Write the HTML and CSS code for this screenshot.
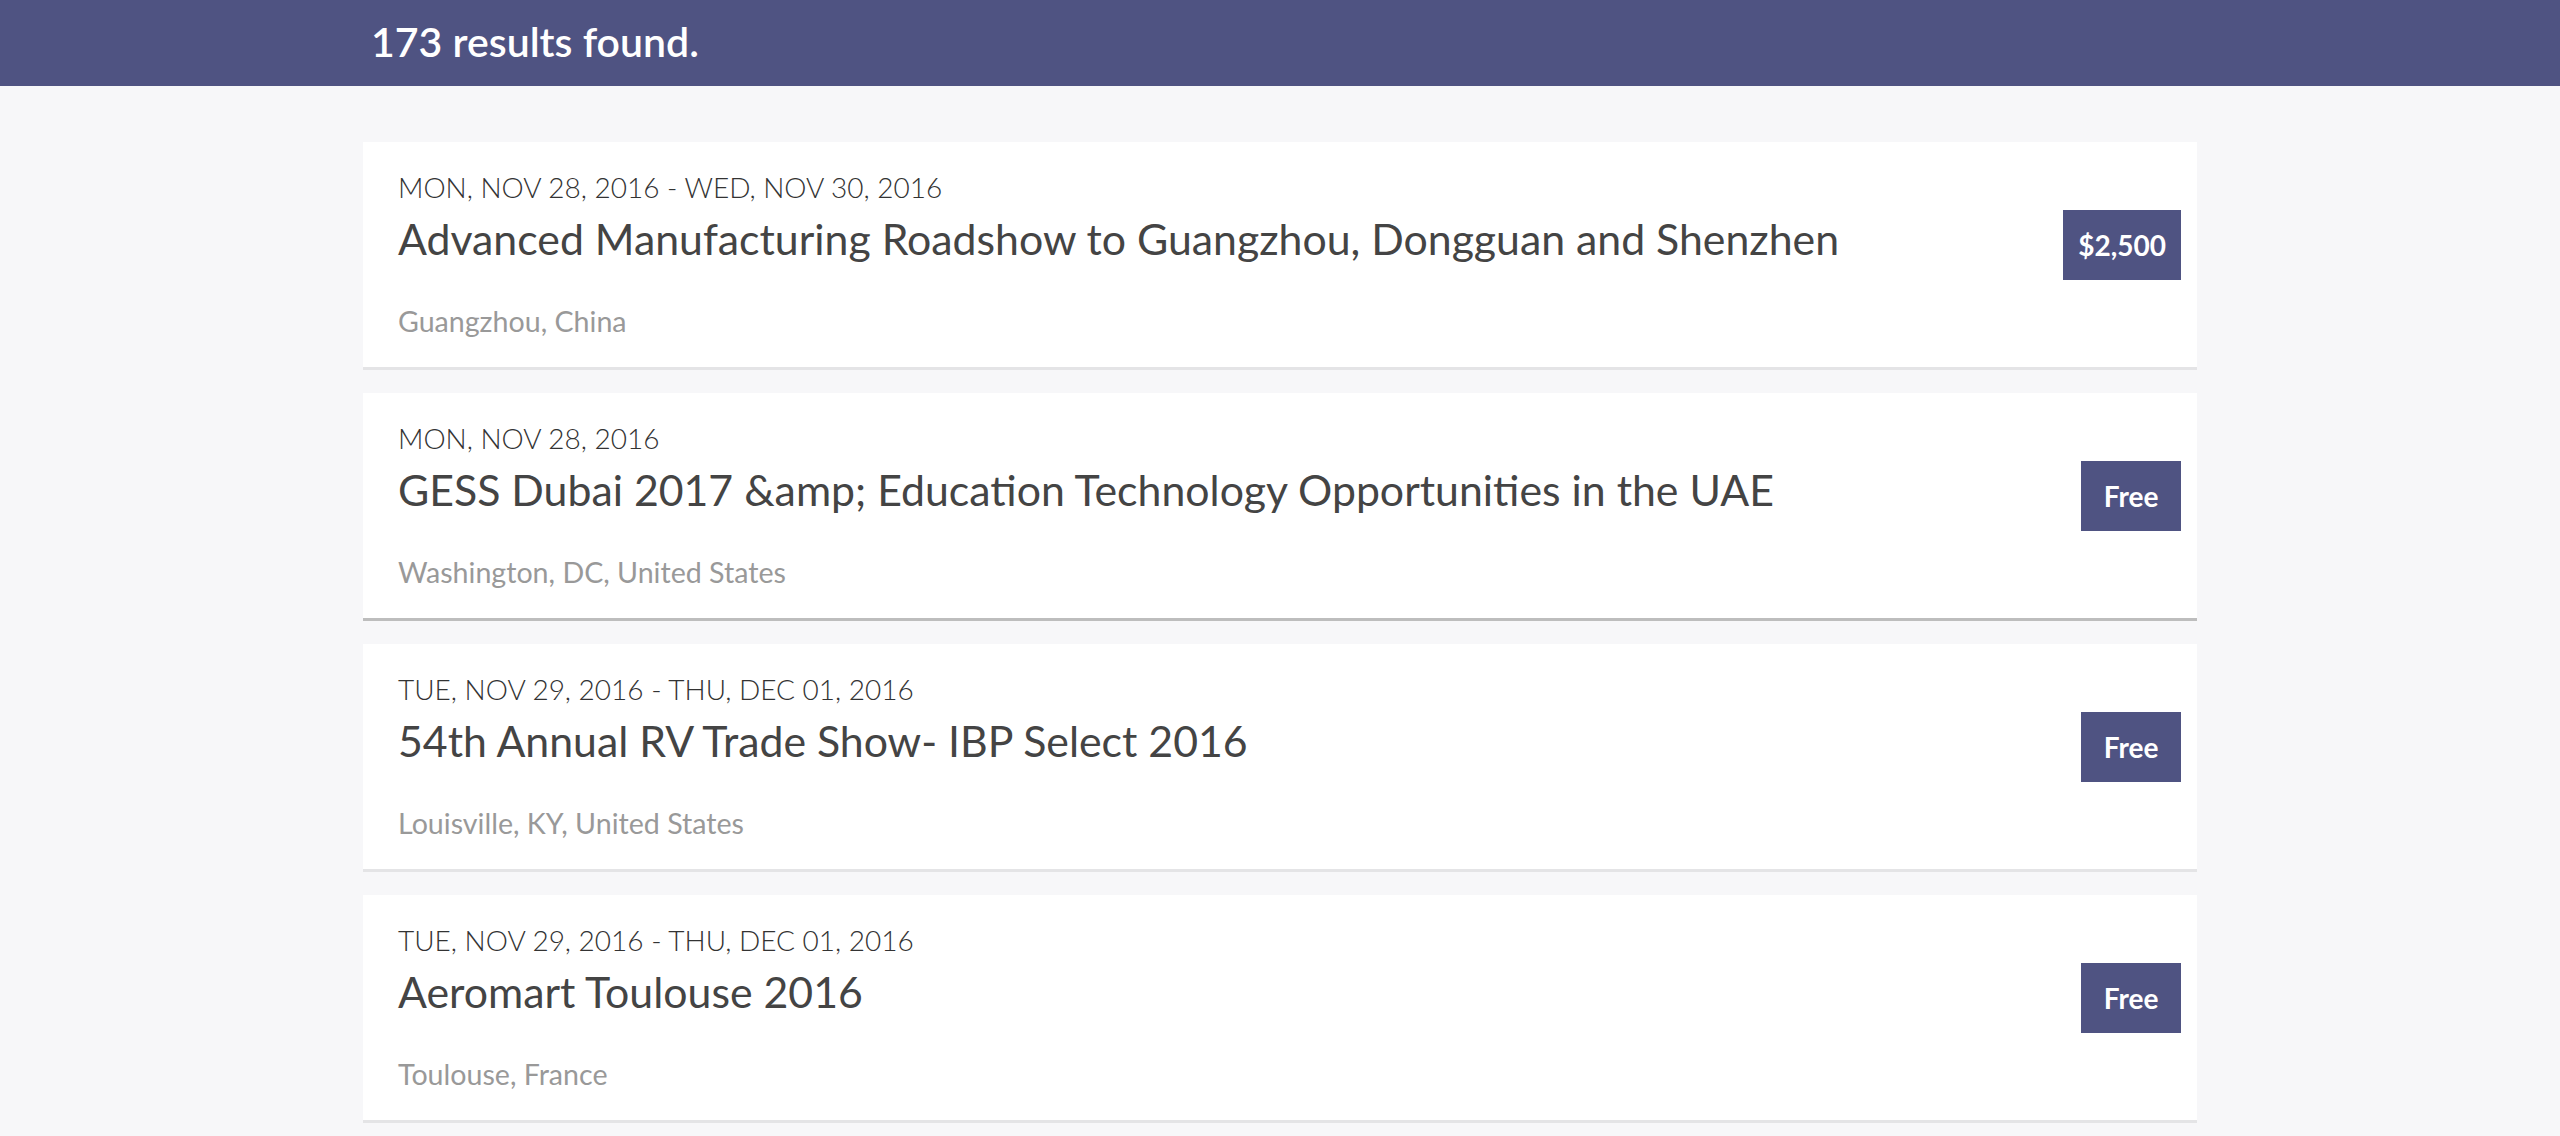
FILE: index.html
```html
<!DOCTYPE html>
<html lang="en">
<head>
<meta charset="utf-8">
<title>Trade Events</title>
<link rel="stylesheet" href="styles.css">
</head>
<body>
<header class="topbar">
  <div class="wrap">
    <h1 class="count">173 results found.</h1>
  </div>
</header>
<main class="wrap list">
  <article class="card">
    <div class="info">
      <div class="date">MON, NOV 28, 2016 - WED, NOV 30, 2016</div>
      <h2 class="title">Advanced Manufacturing Roadshow to Guangzhou, Dongguan and Shenzhen</h2>
      <div class="place">Guangzhou, China</div>
    </div>
    <span class="price">$2,500</span>
  </article>
  <article class="card active">
    <div class="info">
      <div class="date">MON, NOV 28, 2016</div>
      <h2 class="title">GESS Dubai 2017 &amp;amp; Education Technology Opportunities in the UAE</h2>
      <div class="place">Washington, DC, United States</div>
    </div>
    <span class="price">Free</span>
  </article>
  <article class="card">
    <div class="info">
      <div class="date">TUE, NOV 29, 2016 - THU, DEC 01, 2016</div>
      <h2 class="title">54th Annual RV Trade Show- IBP Select 2016</h2>
      <div class="place">Louisville, KY, United States</div>
    </div>
    <span class="price">Free</span>
  </article>
  <article class="card">
    <div class="info">
      <div class="date">TUE, NOV 29, 2016 - THU, DEC 01, 2016</div>
      <h2 class="title">Aeromart Toulouse 2016</h2>
      <div class="place">Toulouse, France</div>
    </div>
    <span class="price">Free</span>
  </article>
</main>
</body>
</html>
```
FILE: styles.css
```css
html, body {
  margin: 0;
  padding: 0;
}
body {
  background: #f7f7f9;
  font-family: Lato, "Open Sans", "Liberation Sans", sans-serif;
  overflow: hidden;
}
.wrap {
  width: 1834px;
  margin: 0 auto;
}
.topbar {
  background: #4f5382;
  height: 86px;
  box-sizing: border-box;
  padding-top: 17px;
}
.count {
  margin: 0;
  padding-left: 8px;
  color: #ffffff;
  font-size: 41px;
  line-height: 50px;
  font-weight: 600;
}
.list {
  padding-top: 56px;
}
.card {
  display: flex;
  align-items: flex-start;
  justify-content: space-between;
  background: #ffffff;
  border-bottom: 3px solid #e4e4e6;
  padding: 28px 16px 29px 35px;
  margin-bottom: 23px;
}
.card.active {
  border-bottom-color: #bdbdbd;
}
.date {
  font-size: 28px;
  line-height: 34px;
  font-weight: 300;
  color: #333333;
}
.title {
  margin: 9px 0 39px;
  font-size: 42.8px;
  line-height: 52px;
  font-weight: 400;
  color: #444444;
}
.place {
  font-size: 28.6px;
  line-height: 34px;
  color: #999999;
}
.price {
  margin-top: 40px;
  min-width: 100px;
  box-sizing: border-box;
  padding: 0 15px;
  height: 70px;
  line-height: 70px;
  text-align: center;
  background: #4f5382;
  color: #ffffff;
  font-size: 28px;
  font-weight: 700;
}
```
